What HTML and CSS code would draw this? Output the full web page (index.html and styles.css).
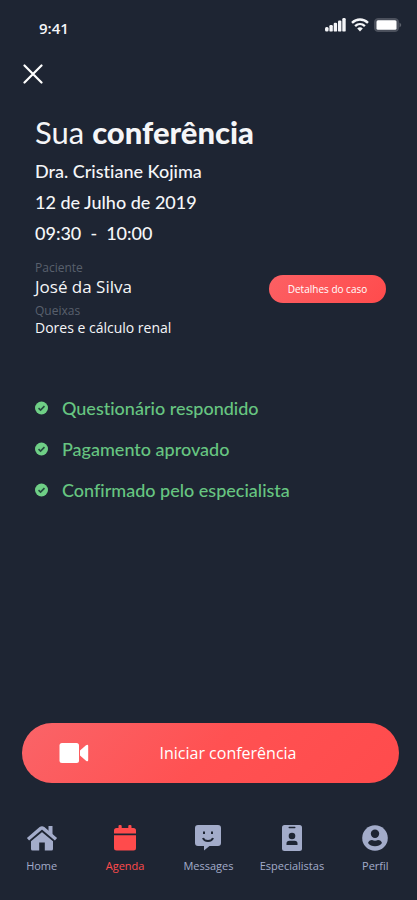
FILE: index.html
```html
<!DOCTYPE html>
<html lang="pt-BR">
<head>
<meta charset="utf-8">
<meta name="viewport" content="width=device-width, initial-scale=1">
<title>Sua conferência</title>
<link rel="stylesheet" href="styles.css">
</head>
<body>
<div class="app">
  <header class="status">
    <span class="status-time">9:41</span>
    <span class="status-icons">
      <svg width="21" height="14" viewBox="0 0 21 14" fill="#f4f5f8" aria-hidden="true"><rect y="9" width="3.6" height="4.6" rx="1.5"/><rect x="4.4" y="7" width="3.4" height="6.6" rx="1.2"/><rect x="8.7" y="4.8" width="3.4" height="8.8" rx="1.2"/><rect x="13" y="2.4" width="3.4" height="11.2" rx="1.2"/><rect x="17.3" width="3.4" height="13.6" rx="1.2"/></svg>
      <svg width="18" height="14" viewBox="0 0 18 14" fill="none" stroke="#f4f5f8" stroke-width="2.4" aria-hidden="true"><path d="M1 4.8C5.6 .4 12.4 .4 17 4.8M4.1 8.2C7 5.4 11 5.4 13.9 8.2"/><path d="M6.2 10.4C8 8.9 10 8.9 11.8 10.4L9 13.5Z" fill="#f4f5f8" stroke="none"/></svg>
      <svg width="28" height="14" viewBox="0 0 28 14" aria-hidden="true"><rect x=".5" y=".5" width="24" height="13" rx="3.5" fill="#4b505c" stroke="#4b505c"/><rect x="2.5" y="2.2" width="20" height="9.6" rx="1.5" fill="#fff"/><path d="M25.500 4.500Q29 7 25.500 9.500Z" fill="#5d626d"/></svg>
    </span>
  </header>

  <button class="close" type="button" aria-label="Fechar">
    <svg width="20" height="20" viewBox="0 0 20 20" fill="none" stroke="#fff" stroke-width="2.2" stroke-linecap="round"><path d="M1.500 1.500l17 17M18.500 1.500l-17 17"/></svg>
  </button>

  <main class="content">
    <h1 class="title">Sua <strong>conferência</strong></h1>
    <p class="info">Dra. Cristiane Kojima</p>
    <p class="info">12 de Julho de 2019</p>
    <p class="info">09:30&nbsp; -&nbsp; 10:00</p>

    <section class="case">
      <dl class="patient">
        <dt>Paciente</dt>
        <dd class="patient-name">José da Silva</dd>
        <dt>Queixas</dt>
        <dd class="patient-complaint">Dores e cálculo renal</dd>
      </dl>
      <button class="details" type="button">Detalhes do caso</button>
    </section>

    <ul class="checks">
      <li><svg width="13" height="14" viewBox="0 0 14 14" aria-hidden="true"><circle cx="7" cy="7" r="7" fill="#6fcf86"/><path d="M3.800 7.200L6 9.300L10.200 5" fill="none" stroke="#25493f" stroke-width="1.7"/></svg>Questionário respondido</li>
      <li><svg width="13" height="14" viewBox="0 0 14 14" aria-hidden="true"><circle cx="7" cy="7" r="7" fill="#6fcf86"/><path d="M3.800 7.200L6 9.300L10.200 5" fill="none" stroke="#25493f" stroke-width="1.7"/></svg>Pagamento aprovado</li>
      <li><svg width="13" height="14" viewBox="0 0 14 14" aria-hidden="true"><circle cx="7" cy="7" r="7" fill="#6fcf86"/><path d="M3.800 7.200L6 9.300L10.200 5" fill="none" stroke="#25493f" stroke-width="1.7"/></svg>Confirmado pelo especialista</li>
    </ul>
  </main>

  <button class="start" type="button">
    <svg width="30" height="20" viewBox="0 0 30 20" fill="#fff" aria-hidden="true"><rect x=".5" width="19.5" height="20" rx="2.5"/><path d="M21 7.500L27 2.200Q29.200 .9 29.200 3V17Q29.200 19.100 27 17.800L21 12.500Z"/></svg>
    <span>Iniciar conferência</span>
  </button>

  <nav class="tabs">
    <a href="#home"><svg width="32" height="28" viewBox="0 0 32 28" fill="currentColor" aria-hidden="true"><path d="M22.500 2H26.500V12L22.500 9Z"/><path d="M16 7.300L27 16.600V25Q27 26.500 25.500 26.500H18.800V18.500H13.200V26.500H6.500Q5 26.500 5 25V16.600Z"/><path d="M3 16.800L16 6L29 16.800" fill="none" stroke="#1e2533" stroke-width="3.4"/><path d="M2 15.200L14.700 4.400Q16 3.400 17.300 4.400L30 15.200" fill="none" stroke="currentColor" stroke-width="3.4"/></svg>Home</a>
    <a href="#agenda" class="active" aria-current="page"><svg width="32" height="28" viewBox="0 0 32 28" fill="currentColor" aria-hidden="true"><path d="M5 9.500V6.500Q5 4 7.500 4H9.500V2Q9.500 .9 10.700 .9H11.500Q12.700 .9 12.700 2V4H19.300V2Q19.300 .9 20.500 .9H21.300Q22.500 .9 22.500 2V4H24.500Q27 4 27 6.500V9.500ZM5 11.300H27V24Q27 26.500 24.500 26.500H7.500Q5 26.500 5 24Z"/></svg>Agenda</a>
    <a href="#messages"><svg width="32" height="28" viewBox="0 0 32 28" aria-hidden="true"><path d="M6 1H26Q29 1 29 4V19Q29 22 26 22H17.500L12 26.500V22H6Q3 22 3 19V4Q3 1 6 1Z" fill="currentColor"/><g fill="none" stroke="#1e2533" stroke-width="2"><path d="M12 7.500V10M20 7.500V10M11 14Q12 17 16 17Q20 17 21 14"/></g></svg>Messages</a>
    <a href="#especialistas"><svg width="32" height="28" viewBox="0 0 32 28" aria-hidden="true"><rect x="6" y="1" width="20" height="26" rx="2.5" fill="currentColor"/><g fill="#1e2533"><rect x="12.5" y="2.8" width="7" height="1.4" rx=".7"/><circle cx="16" cy="12" r="3.3"/><path d="M10.500 21V19.500Q10.500 16.800 13.500 16.800H18.500Q21.500 16.800 21.500 19.500V21Z"/></g></svg>Especialistas</a>
    <a href="#perfil"><svg width="32" height="28" viewBox="0 0 32 28" aria-hidden="true"><circle cx="16" cy="14" r="12.8" fill="currentColor"/><g fill="#1e2533"><circle cx="16" cy="9.8" r="4.2"/><path d="M9 19Q10 16 13 16Q16 17.500 19 16Q22 16 23 19Q20.500 22.200 16 22.200Q11.500 22.200 9 19Z"/></g></svg>Perfil</a>
  </nav>
</div>
</body>
</html>
```
FILE: styles.css
```css
* {
  box-sizing: border-box;
}

body {
  margin: 0;
  background: #1e2533;
  color: #f5f6f8;
  font-family: "Open Sans", "Noto Sans", sans-serif;
  font-variant-ligatures: none;
}

button {
  border: 0;
  padding: 0;
  font: inherit;
  color: #fff;
  cursor: pointer;
}

svg {
  display: block;
  flex: none;
}

.app {
  display: flex;
  flex-direction: column;
  min-height: 100vh;
}

.status {
  display: flex;
  justify-content: space-between;
  padding: 18px 15px 0 39px;
}

.status-time {
  font-size: 15px;
  font-weight: 600;
  line-height: 20px;
}

.status-icons {
  display: flex;
  gap: 5px;
}

.close {
  align-self: flex-start;
  margin: 22px 0 0 19px;
  padding: 4px;
  background: none;
}

.content {
  flex: 1;
  padding: 24px 31px 24px 35px;
}

.title {
  margin: 0 0 4px;
  font-family: Lato, sans-serif;
  font-size: 31px;
  font-weight: 400;
  line-height: 40px;
}

.title strong {
  font-weight: 900;
}

.info {
  margin: 0;
  font-family: Lato, sans-serif;
  font-size: 18px;
  font-weight: 500;
  line-height: 31px;
}

.case {
  display: flex;
  align-items: center;
  justify-content: space-between;
  margin-top: 11px;
}

.patient {
  margin: 0;
}

.patient dt {
  color: #59606d;
  font-size: 12px;
  line-height: 16px;
}

.patient dd {
  margin: 0;
}

.patient .patient-name {
  margin-bottom: 5px;
  font-size: 17px;
  line-height: 22px;
}

.patient-complaint {
  font-size: 14px;
  line-height: 18px;
}

.details {
  width: 117px;
  height: 28px;
  margin-bottom: 20px;
  border-radius: 14px;
  background: linear-gradient(135deg, #fc6064, #ff4b4c);
  font-size: 10px;
}

.checks {
  display: grid;
  gap: 17px;
  margin: 59px 0 0;
  padding: 0;
  list-style: none;
  color: #67c581;
  font-family: Lato, sans-serif;
  font-size: 18px;
  font-weight: 500;
  line-height: 24px;
}

.checks li {
  display: flex;
  align-items: center;
  gap: 14px;
}

.start {
  display: grid;
  grid-template-columns: 30px 1fr;
  align-items: center;
  height: 60px;
  margin: 0 18px 0 22px;
  padding: 0 32px 0 37px;
  border-radius: 30px;
  background: linear-gradient(135deg, #fa6468, #ff5152 50%, #ff4b4c);
  font-size: 16px;
}

.tabs {
  display: grid;
  grid-template-columns: repeat(5, 1fr);
  padding: 41px 0 25px;
}

.tabs a {
  display: flex;
  flex-direction: column;
  align-items: center;
  gap: 5px;
  color: #a3acca;
  font-size: 11px;
  line-height: 18px;
  text-decoration: none;
}

.tabs a.active {
  color: #ff4b4c;
}
```
